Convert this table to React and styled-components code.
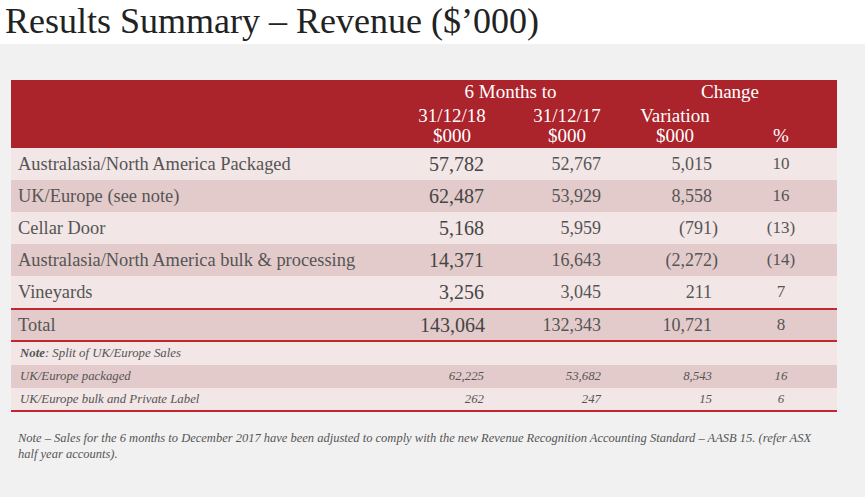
import React from 'react'
import styled, { createGlobalStyle } from 'styled-components'

const GlobalStyle = createGlobalStyle`
  body {
    margin: 0;
    background: #f1f1f1;
    font-family: "Liberation Serif", "Times New Roman", serif;
  }
`

const cols = '409px 64px 49px 68px 37px 74px 48px 42px 1fr'

const Page = styled.div`
  width: 865px;
  min-height: 497px;
  background: #f1f1f1;
`

const TitleBar = styled.header`
  background: #fff;
  height: 44px;
  padding-left: 5px;
`

const Title = styled.h1`
  margin: 0;
  font-weight: normal;
  font-size: 36px;
  line-height: 42px;
  color: #222;
`

const Content = styled.main`
  padding: 36px 28px 0 11px;
`

const Table = styled.div`
  width: 826px;
`

const Head = styled.div`
  display: grid;
  grid-template-columns: ${cols};
  grid-template-rows: 20px 24px 20px;
  align-items: end;
  padding: 2px 0;
  background: #ab232b;
  color: #fff;
  font-size: 19px;
  line-height: 20px;
`

const HeadCell = styled.div`
  grid-column: ${p => p.$col};
  grid-row: ${p => p.$row};
  display: flex;
  justify-content: center;
  white-space: nowrap;
  padding-left: ${p => p.$shift || 0}px;
`

const Row = styled.div`
  display: grid;
  grid-template-columns: ${cols};
  align-items: center;
  height: ${p => p.$h || 32}px;
  background: ${p => (p.$shade ? '#e3cbcb' : '#f2e6e6')};
  color: #555;
  font-style: ${p => (p.$small ? 'italic' : 'normal')};
  font-size: ${p => (p.$small ? '12.8px' : '18.4px')};
  border-top: ${p => (p.$lineTop ? '2px solid #c1272d' : 'none')};
  border-bottom: ${p => (p.$lineBottom ? '2px solid #c1272d' : 'none')};
`

const Label = styled.div`
  grid-column: 1;
  padding-left: ${p => (p.$small ? 9 : 7)}px;
  white-space: nowrap;
`

const Num = styled.div`
  grid-column: ${p => p.$col};
  text-align: right;
  white-space: nowrap;
  font-size: ${p => p.$size || 'inherit'};
  color: ${p => (p.$strong ? '#454545' : 'inherit')};
`

const Pct = styled.div`
  grid-column: 8;
  text-align: center;
  white-space: nowrap;
  font-size: ${p => p.$size || 'inherit'};
`

const Paren = styled.span`
  margin-right: -0.333em;
`

const Footnote = styled.p`
  margin: 0;
  padding: 18px 7px 0;
  font-style: italic;
  font-size: 12.5px;
  line-height: 16px;
  color: #555;
`

const rows = [
  ['Australasia/North America Packaged', '57,782', '52,767', '5,015', '10'],
  ['UK/Europe (see note)', '62,487', '53,929', '8,558', '16'],
  ['Cellar Door', '5,168', '5,959', '(791)', '(13)'],
  ['Australasia/North America bulk & processing', '14,371', '16,643', '(2,272)', '(14)'],
  ['Vineyards', '3,256', '3,045', '211', '7'],
]

const subRows = [
  ['UK/Europe packaged', '62,225', '53,682', '8,543', '16'],
  ['UK/Europe bulk and Private Label', '262', '247', '15', '6'],
]

const Value = ({ v }) =>
  v.startsWith('(') ? <>{v.slice(0, -1)}<Paren>)</Paren></> : v

const App = () => (
  <Page>
    <GlobalStyle />
    <TitleBar>
      <Title>Results Summary – Revenue ($’000)</Title>
    </TitleBar>
    <Content>
      <Table>
        <Head>
          <HeadCell $col="2 / 5" $row={1}>6 Months to</HeadCell>
          <HeadCell $col="6 / 9" $row={1} $shift={20}>Change</HeadCell>
          <HeadCell $col={2} $row={2}>31/12/18</HeadCell>
          <HeadCell $col={4} $row={2}>31/12/17</HeadCell>
          <HeadCell $col={6} $row={2}>Variation</HeadCell>
          <HeadCell $col={2} $row={3}>$000</HeadCell>
          <HeadCell $col={4} $row={3}>$000</HeadCell>
          <HeadCell $col={6} $row={3}>$000</HeadCell>
          <HeadCell $col={8} $row={3}>%</HeadCell>
        </Head>
        {rows.map((r, i) => (
          <Row key={r[0]} $shade={i % 2 === 1}>
            <Label>{r[0]}</Label>
            <Num $col={2} $size="20px" $strong>{r[1]}</Num>
            <Num $col={4} $size="18px">{r[2]}</Num>
            <Num $col={6} $size="18px"><Value v={r[3]} /></Num>
            <Pct $size="17px">{r[4]}</Pct>
          </Row>
        ))}
        <Row $shade $h={30} $lineTop $lineBottom>
          <Label>Total</Label>
          <Num $col={2} $size="20px" $strong>143,064</Num>
          <Num $col={4} $size="18px">132,343</Num>
          <Num $col={6} $size="18px">10,721</Num>
          <Pct $size="17px">8</Pct>
        </Row>
        <Row $small $h={23}>
          <Label $small><b>Note</b>: Split of UK/Europe Sales</Label>
        </Row>
        {subRows.map((r, i) => (
          <Row key={r[0]} $small $h={i === 0 ? 23 : 22} $shade={i === 0} $lineBottom={i === 1}>
            <Label $small>{r[0]}</Label>
            <Num $col={2}>{r[1]}</Num>
            <Num $col={4}>{r[2]}</Num>
            <Num $col={6}>{r[3]}</Num>
            <Pct>{r[4]}</Pct>
          </Row>
        ))}
      </Table>
      <Footnote>
        Note – Sales for the 6 months to December 2017 have been adjusted to comply with the new
        Revenue Recognition Accounting Standard – AASB 15. (refer ASX half year accounts).
      </Footnote>
    </Content>
  </Page>
)

export default App
